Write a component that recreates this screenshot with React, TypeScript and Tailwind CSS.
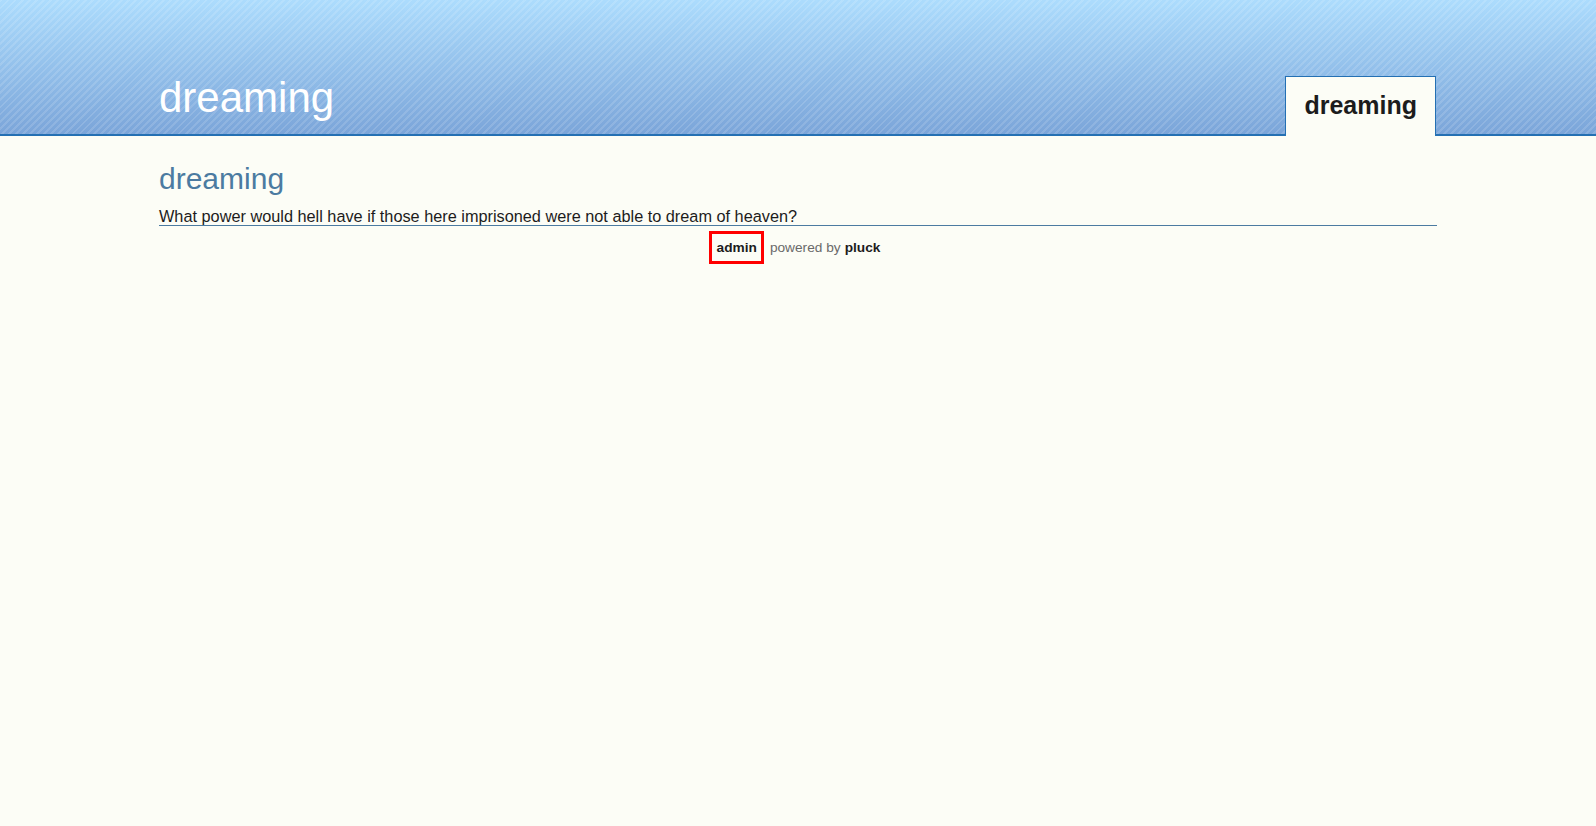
export default function App() {
  return (
    <div className="min-h-[826px] w-full bg-[#fcfdf6] font-['Liberation_Sans',Arial,sans-serif]">
      <header className="h-[136px] border-b-2 border-[#2470b3] bg-[image:repeating-linear-gradient(135deg,rgba(255,255,255,0.13)_0px,rgba(255,255,255,0.13)_2px,rgba(255,255,255,0)_2px,rgba(255,255,255,0)_5px),linear-gradient(to_bottom,#acdcfd,#7ba5d9)]">
        <div className="mx-auto flex h-full w-[1278px] items-end justify-between">
          <div className="mb-[15px] text-[42px] leading-none text-white">dreaming</div>
          <div className="mb-[-2px] mr-[1px] h-[60px] border border-b-0 border-[#2470b3] bg-[#fcfdf6] px-[18px] pt-[16px] text-[25px] font-bold leading-none text-[#1c1c1c]">
            dreaming
          </div>
        </div>
      </header>
      <main className="mx-auto w-[1278px]">
        <h1 className="pt-[28px] text-[30px] leading-none text-[#4b7ba1]">dreaming</h1>
        <p className="mt-[13px] border-b border-[#4b7ba1] text-[16.3px] leading-[18px] text-[#1c1c1c]">
          What power would hell have if those here imprisoned were not able to dream of heaven?
        </p>
        <div className="mt-[5px] flex items-center justify-center pr-[7px] text-[13.7px] leading-[15px]">
          <span className="border-[3px] border-[#ff0000] py-[6px] pl-[5px] pr-[4px] font-bold text-[#1c1c1c]">admin</span>
          <span className="ml-[6px] text-[#6a6a6a]">powered by</span>
          <span className="ml-[4px] font-bold text-[#1c1c1c]">pluck</span>
        </div>
      </main>
    </div>
  );
}
